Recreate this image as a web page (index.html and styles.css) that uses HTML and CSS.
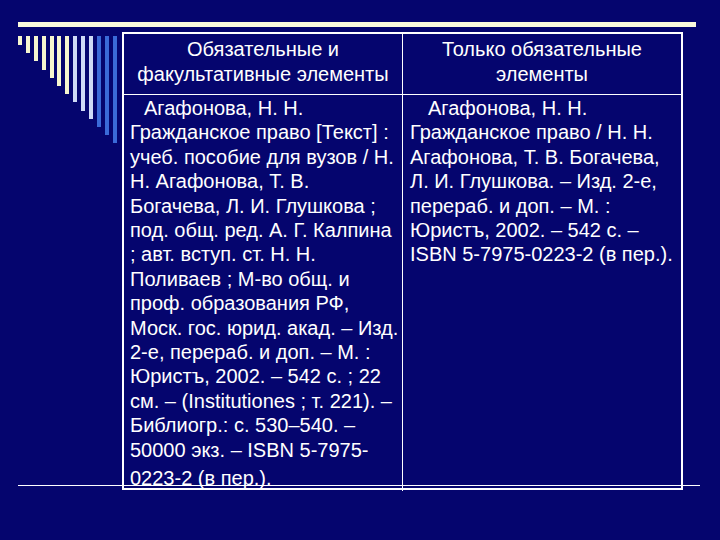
FILE: index.html
```html
<!DOCTYPE html>
<html lang="ru">
<head>
<meta charset="utf-8">
<title>Обязательные элементы</title>
<link rel="stylesheet" href="styles.css">
</head>
<body>
<div class="slide">
  <div class="topbar"></div>
  <div class="main">
    <div class="bars">
      <span class="bar cream" style="height:9px"></span>
      <span class="bar cream" style="height:17px"></span>
      <span class="bar cream" style="height:25px"></span>
      <span class="bar cream" style="height:34px"></span>
      <span class="bar cream" style="height:42px"></span>
      <span class="bar cream" style="height:50px"></span>
      <span class="bar cream" style="height:58px"></span>
      <span class="bar pale" style="height:66px"></span>
      <span class="bar pale" style="height:75px"></span>
      <span class="bar pale" style="height:83px"></span>
      <span class="bar blue" style="height:91px"></span>
      <span class="bar blue" style="height:99px"></span>
      <span class="bar blue" style="height:107px"></span>
    </div>
    <div class="table">
      <div class="cell head left">Обязательные и<br>факультативные элементы</div>
      <div class="cell head">Только обязательные<br>элементы</div>
      <div class="cell body left">
        <p class="first-l">Агафонова, Н. Н.</p>
        <p>Гражданское право [Текст] :</p>
        <p>учеб. пособие для вузов / Н.</p>
        <p>Н. Агафонова, Т. В.</p>
        <p>Богачева, Л. И. Глушкова ;</p>
        <p>под. общ. ред. А. Г. Калпина</p>
        <p>; авт. вступ. ст. Н. Н.</p>
        <p>Поливаев ; М-во общ. и</p>
        <p>проф. образования РФ,</p>
        <p>Моск. гос. юрид. акад. – Изд.</p>
        <p>2-е, перераб. и доп. – М. :</p>
        <p>Юристъ, 2002. – 542 с. ; 22</p>
        <p>см. – (Institutiones ; т. 221). –</p>
        <p>Библиогр.: с. 530–540. –</p>
        <p>50000 экз. – ISBN 5-7975-</p>
        <p class="last">0223-2 (в пер.).</p>
      </div>
      <div class="cell body">
        <p class="first-r">Агафонова, Н. Н.</p>
        <p>Гражданское право / Н. Н.</p>
        <p>Агафонова, Т. В. Богачева,</p>
        <p>Л. И. Глушкова. – Изд. 2-е,</p>
        <p>перераб. и доп. – М. :</p>
        <p>Юристъ, 2002. – 542 с. –</p>
        <p>ISBN 5-7975-0223-2 (в пер.).</p>
      </div>
    </div>
  </div>
  <div class="rule"></div>
</div>
</body>
</html>
```
FILE: styles.css
```css
html, body {
  margin: 0;
  padding: 0;
  background: #05056e;
}
body {
  width: 720px;
  height: 540px;
  overflow: hidden;
  font-family: "Liberation Sans", Arial, sans-serif;
  color: #ffffff;
}
.slide {
  position: relative;
  width: 720px;
  height: 540px;
  padding: 22px 0 0 18px;
  box-sizing: border-box;
}
.topbar {
  width: 678px;
  height: 5px;
  background: #fbfbdc;
}
.main {
  display: flex;
  align-items: flex-start;
  margin-top: 5px;
}
.bars {
  display: flex;
  align-items: flex-start;
  gap: 3.9px;
  margin-top: 4px;
  width: 104px;
}
.bar {
  display: block;
  width: 4px;
  flex: none;
}
.bar.cream { background: #f6f6cf; }
.bar.pale { background: #cfdaf6; }
.bar.blue { background: #3a6ad8; }
.table {
  display: grid;
  grid-template-columns: 279px 1fr;
  grid-template-rows: 61px 1fr;
  width: 561px;
  height: 458px;
  box-sizing: border-box;
  border: 2px solid #ffffff;
}
.cell {
  font-size: 20px;
}
.cell.left {
  border-right: 1px solid #ffffff;
}
.head {
  border-bottom: 1px solid #ffffff;
  text-align: center;
  line-height: 25px;
  padding-top: 3px;
}
.body {
  padding: 1px 6px 0 7px;
  line-height: 24.4px;
}
.body.left {
  padding-left: 6px;
}
.body p {
  margin: 0;
  white-space: nowrap;
}
.body p.first-l { text-indent: 14px; }
.body p.first-r { text-indent: 18px; }
.body p.last { padding-top: 4px; }
.rule {
  position: absolute;
  left: 18px;
  top: 485px;
  width: 682px;
  height: 1px;
  background: #ffffff;
}
```
